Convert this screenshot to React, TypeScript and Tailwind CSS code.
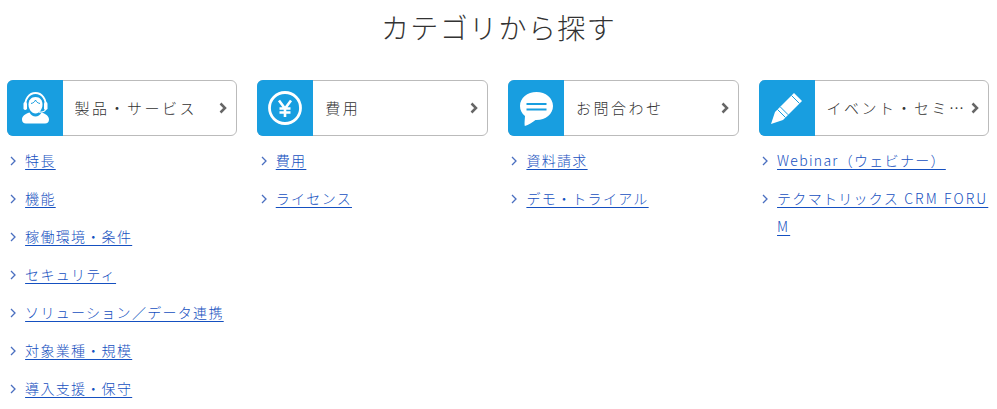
import type { ReactNode } from 'react';

const FONT = "font-['Noto_Sans_CJK_JP','Noto_Sans',sans-serif]";

type Category = {
  title: string;
  icon: ReactNode;
  links: { key: string; label: ReactNode }[];
};

const plain = (items: string[]) => items.map((item) => ({ key: item, label: item }));

const categories: Category[] = [
  {
    title: '製品・サービス',
    icon: (
      <svg viewBox="0 0 56 56" className="h-14 w-14">
        {/* headset band */}
        <path d="M18.500 28c-1.500-9 4-15 10-15s11.500 6 10 15" fill="none" stroke="#fff" strokeWidth="1.800" />
        <rect x="16.500" y="22" width="3.500" height="8" rx="1.700" fill="#fff" />
        <rect x="37" y="22" width="3.500" height="8" rx="1.700" fill="#fff" />
        {/* head and hair parting */}
        <path d="M28.500 17c-4.500 0-7 3.500-7 7.500 0 4.500 3 9 7 9s7-4.500 7-9c0-4-2.500-7.500-7-7.500z" fill="#fff" />
        <path d="M24 23.500c2.500-.5 3.800-1.800 4.500-3.500.7 1.700 2 3 4.500 3.500" fill="none" stroke="#189ee0" strokeWidth="1" />
        {/* mic */}
        <path d="M38.500 29c0 2-2.500 3.200-6.500 3.200" fill="none" stroke="#fff" strokeWidth="1.200" />
        {/* shoulders */}
        <path d="M22.500 32.500c-4.500 1.500-7.500 3.500-7.500 7 0 2.500 1.500 4 4 4h19c2.500 0 4-1.500 4-4 0-3.500-3-5.500-7.500-7-1.500 2.500-3.500 4-6 4s-4.500-1.500-6-4z" fill="#fff" />
      </svg>
    ),
    links: plain(['特長', '機能', '稼働環境・条件', 'セキュリティ', 'ソリューション／データ連携', '対象業種・規模', '導入支援・保守']),
  },
  {
    title: '費用',
    icon: (
      <svg viewBox="0 0 56 56" className="h-14 w-14" fill="none" stroke="#fff">
        <circle cx="28" cy="28" r="15.500" strokeWidth="2.800" />
        <path d="M22 20.500l6 8 6-8M28 28.500V37M22.500 28.500h11M22.500 32.500h11" strokeWidth="2.600" />
      </svg>
    ),
    links: plain(['費用', 'ライセンス']),
  },
  {
    title: 'お問合わせ',
    icon: (
      <svg viewBox="0 0 56 56" className="h-14 w-14">
        <path fill="#fff" d="M28.500 12c-9.200 0-16.500 6-16.500 14 0 4 1.800 7.500 5 10-.2 3.500-.8 7.500-.2 10 3.700-1 7.700-4 10.700-6.100.4 0 .700.100 1 .100 9.200 0 16.500-6 16.500-14s-7.300-14-16.500-14z" />
        <path stroke="#189ee0" strokeWidth="2" d="M18.500 24h20M18.500 29.500h20" />
      </svg>
    ),
    links: plain(['資料請求', 'デモ・トライアル']),
  },
  {
    title: 'イベント・セミナー',
    icon: (
      <svg viewBox="0 0 56 56" className="h-14 w-14">
        <path d="M12 44l4-12 19-19 8 8-19 19z" fill="#fff" />
        <path d="M18.500 29.500l8 8M21.200 26.800l8 8M32.500 15.500l8 8" stroke="#189ee0" strokeWidth="1" />
      </svg>
    ),
    links: [
      { key: 'webinar', label: 'Webinar（ウェビナー）' },
      {
        key: 'forum',
        label: (
          <>
            テクマトリックス<span className="tracking-[2.100px]"> CRM FORUM</span>
          </>
        ),
      },
    ],
  },
];

function CategoryColumn({ category }: { category: Category }) {
  return (
    <div className="min-w-0">
      <div className="flex h-14 items-stretch rounded-md border border-[#bbbbbb]">
        <div className="-m-px flex w-14 shrink-0 items-center justify-center rounded-l-md bg-[#189ee0]">
          {category.icon}
        </div>
        <div className="flex min-w-0 flex-1 items-center pr-2 pl-[13px]">
          <span className="min-w-0 flex-1 truncate text-[15px] font-light tracking-[2.500px] text-[#333333]">
            {category.title}
          </span>
          <svg viewBox="0 0 10 12" className="h-3 w-2.5 shrink-0" fill="none" stroke="#666666" strokeWidth="2.500">
            <path d="M2.500 1.500L7 6l-4.500 4.500" />
          </svg>
        </div>
      </div>
      <ul className="mt-[10px] flex flex-col gap-[10px] pl-[3.500px]">
        {category.links.map((link) => (
          <li key={link.key} className="flex text-sm leading-7 font-light tracking-[1.300px]">
            <svg viewBox="0 0 7 10" className="mt-[10px] mr-2 h-2.5 w-[7px] shrink-0" fill="none" stroke="#4a6fc0" strokeWidth="1.300">
              <path d="M1 1l4 4-4 4" />
            </svg>
            <a href="#" className="min-w-0 break-all text-[#1550c0] underline underline-offset-[3px]">
              {link.label}
            </a>
          </li>
        ))}
      </ul>
    </div>
  );
}

export default function App() {
  return (
    <div className={`${FONT} h-[409px] overflow-hidden bg-white`}>
      <h2 className="pt-[7px] text-center text-[28px] leading-10 font-light tracking-[1.400px] text-[#333333]">
        カテゴリから探す
      </h2>
      <div className="mt-[33px] grid grid-cols-4 gap-5 pr-[7.800px] pl-[6.600px]">
        {categories.map((category) => (
          <CategoryColumn key={category.title} category={category} />
        ))}
      </div>
    </div>
  );
}
